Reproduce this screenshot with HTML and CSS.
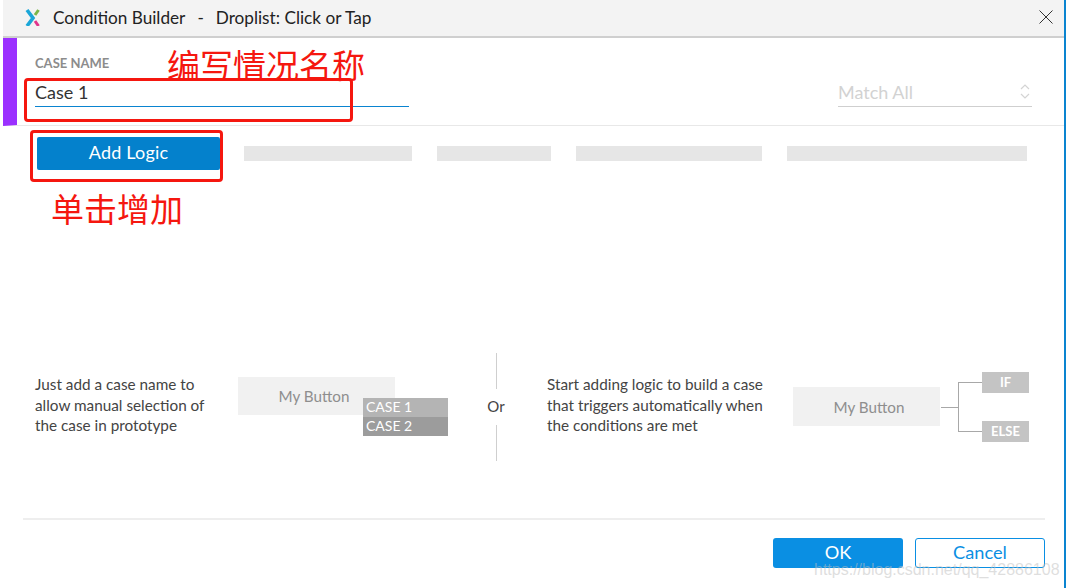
FILE: index.html
```html
<!DOCTYPE html>
<html>
<head>
  <title>Condition Builder</title>
  <meta name="viewport" content="width=device-width, initial-scale=1.0">
  <link rel="stylesheet" href="styles.css">
</head>
<body>
  <div class="window">
    <div class="titlebar">
      <svg class="logo" width="18" height="18" viewBox="0 0 18 18">
        <path d="M4 2 L10 10 L4 18" stroke="#1aa6d8" stroke-width="3.6" fill="none"/>
        <path d="M12 7 L15.5 2" stroke="#7ab648" stroke-width="3" fill="none"/>
        <path d="M12 13 L15.5 18" stroke="#e0368c" stroke-width="3" fill="none"/>
      </svg>
      <span class="title">Condition Builder</span>
      <span class="title-sep">-</span>
      <span class="title">Droplist: Click or Tap</span>
      <svg class="close" width="14" height="14" viewBox="0 0 14 14">
        <path d="M0.5 0.5 L13.5 13.5 M13.5 0.5 L0.5 13.5" stroke="#333" stroke-width="1" fill="none"/>
      </svg>
    </div>

    <div class="case-head">
      <div class="case-name">
        <label class="case-label">CASE NAME</label>
        <div class="case-input">Case 1</div>
      </div>
      <div class="match-select">
        <span>Match All</span>
        <svg width="10" height="17" viewBox="0 0 10 17">
          <path d="M1 6 L5 2 L9 6 M1 11 L5 15 L9 11" stroke="#d4d4d4" stroke-width="1.2" fill="none"/>
        </svg>
      </div>
    </div>

    <div class="toolbar">
      <button class="add-logic">Add Logic</button>
      <div class="placeholders">
        <div class="ph ph-1"></div>
        <div class="ph ph-2"></div>
        <div class="ph ph-3"></div>
        <div class="ph ph-4"></div>
      </div>
    </div>

    <div class="help">
      <p class="help-text help-left">Just add a case name to<br>allow manual selection of<br>the case in prototype</p>
      <div class="demo-left">
        <div class="demo-btn">My Button</div>
        <div class="demo-menu">
          <div class="demo-case case-1">CASE 1</div>
          <div class="demo-case case-2">CASE 2</div>
        </div>
      </div>
      <div class="or-col">
        <div class="or-line"></div>
        <span class="or">Or</span>
        <div class="or-line"></div>
      </div>
      <p class="help-text help-right">Start adding logic to build a case<br>that triggers automatically when<br>the conditions are met</p>
      <div class="demo-right">
        <div class="demo-btn demo-btn-right">My Button</div>
        <svg class="branch" width="42" height="52" viewBox="0 0 42 52">
          <path d="M1 26.5 H18 M18.5 1.5 V50.5 M18 1.5 H42 M18 50.5 H42" stroke="#a8a8a8" stroke-width="1" fill="none"/>
        </svg>
        <div class="tags">
          <div class="tag">IF</div>
          <div class="tag">ELSE</div>
        </div>
      </div>
    </div>

    <div class="footer">
      <button class="btn-ok">OK</button>
      <button class="btn-cancel">Cancel</button>
    </div>
  </div>

  <!-- red notes drawn on top of the screenshot -->
  <div class="note-box note-box-name"></div>
  <div class="note-box note-box-add"></div>
  <div class="note note-name">编写情况名称</div>
  <div class="note note-add">单击增加</div>
  <div class="watermark">https://blog.csdn.net/qq_42886108</div>
</body>
</html>
```

FILE: styles.css
```css
* {
  margin: 0;
  padding: 0;
  box-sizing: border-box;
}

body {
  font-family: 'Lato', 'Open Sans', sans-serif;
  width: 1068px;
  height: 588px;
  overflow: hidden;
  position: relative;
  background: #fff;
  color: #333;
}

.window {
  width: 1066px;
  height: 588px;
  border-left: 3px solid #fff;
  border-right: 2px solid #0a84d0;
  display: flex;
  flex-direction: column;
}

.titlebar {
  height: 38px;
  background: #f3f3f3;
  border-bottom: 2px solid #cfcfcf;
  display: flex;
  align-items: center;
  padding: 0 11px 2px 20px;
  font-size: 17.2px;
  color: #222;
}

.logo {
  margin-right: 12px;
}

.title-sep {
  margin: 0 12px;
}

.close {
  margin-left: auto;
}

.case-head {
  height: 88px;
  border-left: 14px solid #9b30ff;
  border-bottom: 1px solid #e8e8e8;
  display: flex;
  align-items: flex-end;
  justify-content: space-between;
  padding: 0 32px 18px 18px;
}

.case-label {
  display: block;
  font-size: 13px;
  font-weight: 700;
  color: #8c8c8c;
  margin-bottom: 7px;
}

.case-input {
  width: 374px;
  height: 29px;
  font-size: 18px;
  line-height: 28px;
  color: #333;
  border-bottom: 1px solid #0a84d0;
}

.match-select {
  width: 194px;
  height: 28px;
  display: flex;
  justify-content: space-between;
  align-items: center;
  padding: 0 2px 2px 0;
  font-size: 18px;
  color: #d2d2d2;
  border-bottom: 1px solid #cfcfcf;
}

.toolbar {
  display: flex;
  align-items: center;
  padding: 11px 0 0 34px;
}

.add-logic {
  width: 183px;
  height: 33px;
  padding-bottom: 4px;
  background: #0481cc;
  color: #fff;
  border: none;
  border-radius: 2px;
  font-family: inherit;
  font-size: 18px;
  letter-spacing: 0.2px;
}

.placeholders {
  display: flex;
  gap: 25px;
  margin-left: 24px;
}

.ph {
  height: 15px;
  background: #e6e6e6;
}

.ph-1 { width: 168px; }
.ph-2 { width: 114px; }
.ph-3 { width: 186px; }
.ph-4 { width: 240px; }

.help {
  display: flex;
  align-items: center;
  height: 108px;
  margin-top: 183px;
  padding-left: 32px;
}

.help-text {
  font-size: 15.3px;
  line-height: 20.5px;
  color: #444;
  padding-bottom: 4px;
}

.help-left {
  width: 203px;
}

.demo-left {
  width: 210px;
  height: 60px;
  position: relative;
}

.demo-btn {
  width: 157px;
  height: 38px;
  background: #f1f1f1;
  color: #8e8e8e;
  font-size: 15.2px;
  display: flex;
  align-items: center;
  justify-content: center;
  padding-right: 5px;
}

.demo-menu {
  position: absolute;
  left: 125px;
  top: 21px;
  width: 85px;
}

.demo-case {
  height: 19px;
  padding-left: 3px;
  color: #fff;
  font-size: 14px;
  line-height: 18px;
}

.case-1 { background: #b4b4b4; }
.case-2 { background: #9c9c9c; }

.or-col {
  width: 20px;
  height: 108px;
  margin-left: 38px;
  display: flex;
  flex-direction: column;
  align-items: center;
  justify-content: space-between;
}

.or-line {
  width: 1px;
  height: 36px;
  background: #cfcfcf;
}

.or {
  font-size: 15px;
  color: #444;
  padding-bottom: 3px;
}

.help-right {
  width: 236px;
  margin-left: 41px;
}

.demo-right {
  margin-left: 10px;
  display: flex;
  align-items: center;
  margin-top: -1px;
}

.demo-btn-right {
  width: 147px;
  height: 39px;
  padding: 0 0 0 5px;
}

.tags {
  display: flex;
  flex-direction: column;
  gap: 28px;
}

.tag {
  width: 47px;
  height: 21px;
  background: #c4c4c4;
  color: #fff;
  font-size: 13px;
  font-weight: 700;
  line-height: 20px;
  text-align: center;
}

.footer {
  margin: auto 19px 0 20px;
  height: 70px;
  border-top: 2px solid #eee;
  display: flex;
  justify-content: flex-end;
  gap: 12px;
  padding-top: 18px;
}

.btn-ok,
.btn-cancel {
  width: 130px;
  height: 30px;
  padding-bottom: 2px;
  border-radius: 3px;
  font-family: inherit;
  font-size: 18.2px;
}

.btn-ok {
  background: #0a8fe3;
  border: none;
  color: #fff;
}

.btn-cancel {
  background: #fff;
  border: 1.5px solid #0a8fe3;
  color: #0a8fe3;
}

.note-box {
  position: absolute;
  border: 3px solid #f5170f;
  border-radius: 4px;
}

.note-box-name {
  left: 24px;
  top: 78px;
  width: 329px;
  height: 44px;
}

.note-box-add {
  left: 30px;
  top: 130px;
  width: 193px;
  height: 52px;
}

.note {
  position: absolute;
  font-family: 'Noto Sans CJK SC', sans-serif;
  font-size: 33px;
  line-height: 36px;
  color: #f5170f;
}

.note-name {
  left: 167px;
  top: 46px;
}

.note-add {
  left: 51px;
  top: 190px;
}

.watermark {
  position: absolute;
  left: 814px;
  top: 561px;
  font-family: 'Liberation Sans', sans-serif;
  font-size: 16px;
  color: rgba(190, 190, 190, 0.5);
}
```
